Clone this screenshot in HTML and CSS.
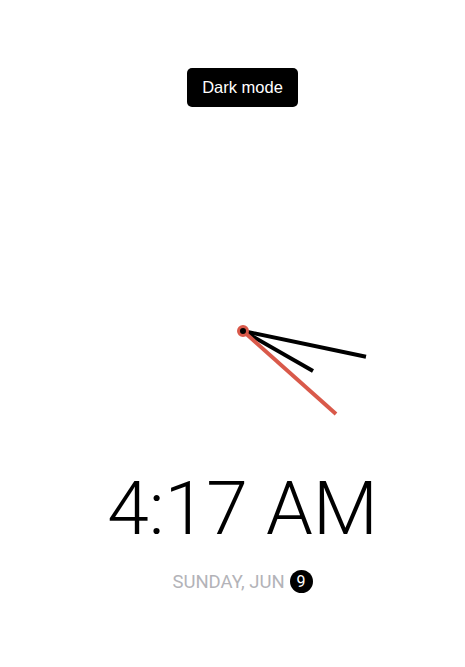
FILE: index.html
```html
<!DOCTYPE html>
<html>
<head>
<meta charset="utf-8">
<link rel="stylesheet" href="styles.css">
</head>
<body>
<div class="app">
  <button class="toggle">Dark mode</button>
  <svg class="clock" width="260" height="260" viewBox="-130 -130 260 260">
    <line class="hand" x1="0" y1="0" x2="70" y2="40"/>
    <line class="hand" x1="0" y1="0" x2="123" y2="25.7"/>
    <line class="hand sec" x1="0" y1="0" x2="93" y2="83"/>
    <circle cx="0" cy="0" r="4.5" fill="#000" stroke="#d9594a" stroke-width="3"/>
  </svg>
  <div class="time">4:17 AM</div>
  <div class="date">SUNDAY, JUN <span class="day">9</span></div>
</div>
</body>
</html>
```
FILE: styles.css
```css
html, body { margin: 0; background: #fff; }
.app {
  display: flex;
  flex-direction: column;
  align-items: center;
  padding-left: 20px;
  padding-top: 68px;
  font-family: Roboto, sans-serif;
}
.toggle {
  background: #000;
  color: #fff;
  border: none;
  border-radius: 5px;
  font-family: "Liberation Sans", Arial, sans-serif;
  font-size: 16.5px;
  height: 39px;
  padding: 0;
  width: 111px;
}
.clock {
  display: block;
  margin-top: 94px;
  overflow: visible;
}
.hand {
  stroke: #000;
  stroke-width: 4;
}
.hand.sec {
  stroke: #d9594a;
  stroke-width: 4;
}
.time {
  margin-top: 10px;
  font-size: 75px;
  font-weight: 300;
  line-height: 1;
  color: #000;
}
.date {
  margin-top: 24px;
  font-size: 18.5px;
  color: #b3b3b8;
  display: flex;
  align-items: center;
  gap: 5px;
}
.day {
  display: inline-flex;
  align-items: center;
  justify-content: center;
  width: 23px;
  height: 23px;
  border-radius: 50%;
  background: #000;
  color: #fff;
  font-size: 16px;
}
```
